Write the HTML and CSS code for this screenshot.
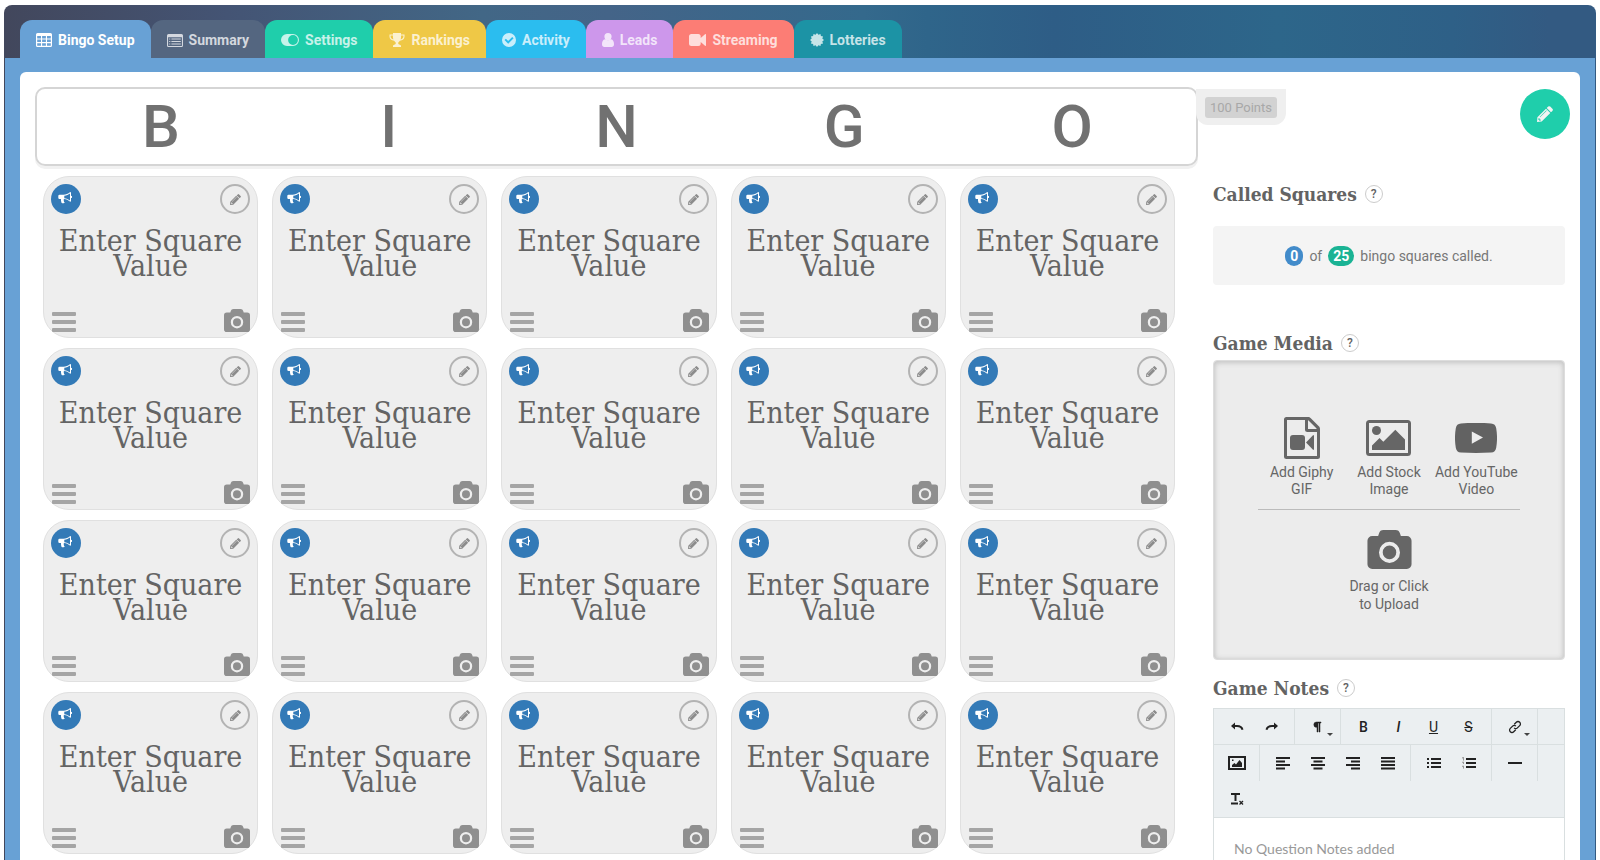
FILE: index.html
```html
<!DOCTYPE html>
<html lang="en">
<head>
    <meta charset="UTF-8">
    <meta name="viewport" content="width=device-width, initial-scale=1.0">
    <title>Bingo Setup</title>
    <link rel="stylesheet" href="styles.css">
</head>
<body>
    <svg class="sprite" aria-hidden="true">
        <symbol id="i-table" viewBox="0 0 16 14"><path fill-rule="evenodd" d="M1.5 0h13A1.5 1.5 0 0 1 16 1.500v11a1.500 1.500 0 0 1-1.500 1.500h-13A1.500 1.500 0 0 1 0 12.500v-11A1.500 1.500 0 0 1 1.500 0zM1.200 3v2.500h3.800V3zM6.100 3v2.500h3.800V3zM11 3v2.500h3.800V3zM1.200 6.600v2.500h3.800V6.600zM6.100 6.600v2.500h3.800V6.600zM11 6.600v2.500h3.800V6.600zM1.200 10.200v2.500h3.800v-2.500zM6.100 10.200v2.500h3.800v-2.500zM11 10.200v2.500h3.800v-2.500z"/></symbol>
        <symbol id="i-list" viewBox="0 0 16 13"><path fill-rule="evenodd" d="M1.500 0h13A1.500 1.500 0 0 1 16 1.500v10a1.500 1.500 0 0 1-1.500 1.500h-13A1.500 1.500 0 0 1 0 11.500v-10A1.500 1.500 0 0 1 1.500 0zM1.100 3.200v8.700h13.800V3.200zM2.200 4.400h1.100v1H2.200zM4.400 4.400h9.400v1H4.400zM2.200 6.900h1.100v1H2.200zM4.400 6.900h9.400v1H4.400zM2.200 9.400h1.100v1H2.200zM4.400 9.400h9.400v1H4.400z"/></symbol>
        <symbol id="i-toggle" viewBox="0 0 18 12"><path fill-rule="evenodd" d="M6 0h6a6 6 0 0 1 0 12H6A6 6 0 0 1 6 0zM12 1.100a4.900 4.900 0 1 0 0 9.800a4.900 4.900 0 1 0 0-9.800z"/></symbol>
        <symbol id="i-trophy" viewBox="0 0 16 14"><path fill-rule="evenodd" d="M4 0h8v1.500h3.500v2.300c0 2-2 3.700-4.600 3.900C10 8.700 9.200 9 9.200 10.200c0 .9.700 1.200 1.600 1.500.7.200 1.200.7 1.200 1.300v1H4v-1c0-.6.500-1.100 1.200-1.300.9-.3 1.600-.6 1.600-1.500C6.800 9 6 8.700 5.100 7.700 2.500 7.500.5 5.800.5 3.800V1.500H4zM1.600 2.600v1.200c0 1 1 2.200 2.700 2.600C4 5.200 3.900 4 3.900 2.600zM14.400 2.600h-2.300c0 1.400-.1 2.600-.4 3.800 1.700-.4 2.700-1.600 2.700-2.600z"/></symbol>
        <symbol id="i-check" viewBox="0 0 14 14"><path fill-rule="evenodd" d="M7 0a7 7 0 1 1 0 14A7 7 0 0 1 7 0zM10.200 3.900L6.200 7.900 3.900 5.700 2.500 7.100l3.700 3.600 5.400-5.400z"/></symbol>
        <symbol id="i-user" viewBox="0 0 12 14"><path d="M6 0a3.600 3.600 0 1 1 0 7.200A3.600 3.600 0 0 1 6 0zM3 6.300c1.800 1.500 4.200 1.500 6 0 2.200.2 3 2.700 3 4.900 0 1.700-1 2.800-2.400 2.800H2.400C1 14 0 12.900 0 11.200c0-2.200.8-4.700 3-4.900z"/></symbol>
        <symbol id="i-video" viewBox="0 0 17 12"><path d="M2.500 0h6.700a2.500 2.500 0 0 1 2.500 2.500v1.600L16 .3c.4-.4 1-.1 1 .4v10.600c0 .5-.6.800-1 .4l-4.300-3.800v1.600A2.500 2.500 0 0 1 9.200 12H2.500A2.500 2.500 0 0 1 0 9.500v-7A2.500 2.500 0 0 1 2.500 0z"/></symbol>
        <symbol id="i-burst" viewBox="0 0 14 14"><path d="M7 0L8.400 1.700 10.500.9 10.900 3.100 13.100 3.500 12.300 5.600 14 7 12.300 8.400 13.100 10.500 10.900 10.900 10.500 13.100 8.400 12.300 7 14 5.600 12.300 3.500 13.100 3.100 10.900.9 10.500 1.700 8.400 0 7 1.700 5.600.9 3.500 3.100 3.100 3.500.9 5.600 1.700z"/></symbol>
        <symbol id="i-pencil" viewBox="0 0 16 16"><path fill-rule="evenodd" d="M11.200.6a1.500 1.500 0 0 1 2 0l2.200 2.200a1.500 1.500 0 0 1 0 2.100L14 6.300 9.700 2zM9 2.700L13.300 7 4.700 15.600 0 16l.4-4.700zM9.300 4.300L2.700 10.900l.4.400 6.600-6.600zM1.500 12.200l-.2 1.300 1.200 1.200 1.300-.2-.1-1.100H2.600v-1.100z"/></symbol>
        <symbol id="i-horn" viewBox="0 0 14 12"><path fill-rule="evenodd" d="M12.200 0c.5 0 .8.300.8.800v3a1.100 1.100 0 0 1 0 2.200v3c0 .5-.3.800-.8.800-1.900-1.600-3.800-2.600-6-2.800-.7.400-.8 1.200-.2 1.700-.4.700.2 1.200.8 1.800-.5 1-2.500 1-3.200.4-.4-1.400-.9-2.500-.5-3.900H1.500A1.200 1.200 0 0 1 .3 5.800V4a1.200 1.200 0 0 1 1.200-1.200h4C7.900 2.800 10.100 1.700 12.200 0zM12 1.400C10.300 2.700 8.600 3.400 6.300 3.700v2.500c2.300.2 4 1 5.700 2.300z"/></symbol>
        <symbol id="i-camera" viewBox="0 0 26 23"><path fill-rule="evenodd" d="M9.500 0h7c1.500 0 2.300.7 2.700 2l.5 1.600h3.500A2.800 2.800 0 0 1 26 6.400v13.800a2.800 2.800 0 0 1-2.800 2.800H2.800A2.800 2.800 0 0 1 0 20.200V6.400a2.800 2.800 0 0 1 2.800-2.800h3.500L6.800 2c.4-1.300 1.200-2 2.700-2zM13 7a6.200 6.200 0 1 0 0 12.400A6.200 6.200 0 1 0 13 7zM13 9.200a4 4 0 1 1 0 8a4 4 0 1 1 0-8z"/></symbol>
        <symbol id="i-bars" viewBox="0 0 24 20"><path d="M1 0h22a1 1 0 0 1 1 1v2a1 1 0 0 1-1 1H1a1 1 0 0 1-1-1V1a1 1 0 0 1 1-1zM1 8h22a1 1 0 0 1 1 1v2a1 1 0 0 1-1 1H1a1 1 0 0 1-1-1V9a1 1 0 0 1 1-1zM1 16h22a1 1 0 0 1 1 1v2a1 1 0 0 1-1 1H1a1 1 0 0 1-1-1v-2a1 1 0 0 1 1-1z"/></symbol>
    </svg>

    <div class="frame">
        <nav class="tabs">
            <a href="#" class="tab tab-setup"><svg width="16" height="14"><use href="#i-table"/></svg>Bingo Setup</a>
            <a href="#" class="tab tab-summary"><svg width="16" height="13"><use href="#i-list"/></svg>Summary</a>
            <a href="#" class="tab tab-settings"><svg width="18" height="12"><use href="#i-toggle"/></svg>Settings</a>
            <a href="#" class="tab tab-rankings"><svg width="16" height="14"><use href="#i-trophy"/></svg>Rankings</a>
            <a href="#" class="tab tab-activity"><svg width="14" height="14"><use href="#i-check"/></svg>Activity</a>
            <a href="#" class="tab tab-leads"><svg width="12" height="14"><use href="#i-user"/></svg>Leads</a>
            <a href="#" class="tab tab-streaming"><svg width="17" height="12"><use href="#i-video"/></svg>Streaming</a>
            <a href="#" class="tab tab-lotteries"><svg width="14" height="14"><use href="#i-burst"/></svg>Lotteries</a>
        </nav>

        <div class="body">
            <div class="panel">
                <main class="board">
                    <div class="letters">
                        <span>B</span><span>I</span><span>N</span><span>G</span><span>O</span>
                        <div class="points"><span>100 Points</span></div>
                    </div>
                    <div class="squares" id="squares"></div>
                </main>

                <aside class="side">
                    <button class="edit" aria-label="Edit game"><svg width="16" height="16"><use href="#i-pencil"/></svg></button>

                    <h2>Called Squares <button class="help">?</button></h2>
                    <p class="called"><b class="pill blue">0</b> of <b class="pill green">25</b> bingo squares called.</p>

                    <h2>Game Media <button class="help">?</button></h2>
                    <div class="media">
                        <div class="media-row">
                            <button class="media-btn">
                                <svg width="36" height="42" viewBox="0 0 36 42" fill="#626262"><path fill-rule="evenodd" d="M2.500 0H24c1.200 0 2 .4 2.800 1.200l8 8c.8.800 1.200 1.600 1.200 2.800v27.500a2.500 2.500 0 0 1-2.500 2.500h-31A2.500 2.500 0 0 1 0 39.500v-37A2.500 2.500 0 0 1 2.500 0zM3 3v36h30V15h-9.500a2.500 2.500 0 0 1-2.500-2.500V3zM24 3.300V12h8.700c-.1-.4-.3-.7-.6-1l-7.100-7.100c-.3-.3-.6-.5-1-.6z"/><rect x="6" y="18" width="15" height="15" rx="3"/><path d="M22 25.500l7-7.300h1v14.600h-1z"/></svg>
                                <span>Add Giphy<br>GIF</span>
                            </button>
                            <button class="media-btn">
                                <svg width="45" height="42" viewBox="0 0 45 42" fill="#626262"><path fill-rule="evenodd" d="M3.500 3h38A3.500 3.500 0 0 1 45 6.500v29a3.500 3.500 0 0 1-3.500 3.500h-38A3.500 3.500 0 0 1 0 35.500v-29A3.500 3.500 0 0 1 3.500 3zM3 6v30h39V6z"/><circle cx="10.500" cy="13.500" r="4.500"/><path d="M6 33v-4.500l7.500-7.500 3.800 3.800 12-12L39 22.500V33z"/></svg>
                                <span>Add Stock<br>Image</span>
                            </button>
                            <button class="media-btn">
                                <svg width="42" height="42" viewBox="0 0 42 42"><path fill="#626262" fill-rule="evenodd" d="M21 6c6.500 0 10.800.2 15 .4 3.200.3 4.600 1.600 5.200 4.900 1.100 6.300 1.100 13 0 19.400-.6 3.300-2 4.600-5.200 4.900-10 .6-20 .6-30 0-3.200-.3-4.600-1.600-5.200-4.900-1.100-6.400-1.100-13.100 0-19.400C1.400 8 2.800 6.700 6 6.400 10.200 6.200 14.500 6 21 6zM16.800 14.500v12.200L28 20.600z"/></svg>
                                <span>Add YouTube<br>Video</span>
                            </button>
                        </div>
                        <button class="media-btn upload">
                            <svg width="45" height="39" fill="#626262"><use href="#i-camera"/></svg>
                            <span>Drag or Click<br>to Upload</span>
                        </button>
                    </div>

                    <h2 class="notes-title"><label for="notes">Game Notes</label> <button class="help">?</button></h2>
                    <div class="editor">
                        <div class="toolbar">
                            <div class="tools">
                                <div class="group">
                                    <button aria-label="Undo"><svg width="14" height="14" viewBox="0 0 14 14"><path d="M2 6h5c3 0 5 1.500 5.500 3.800" class="ln"/><path d="M5 2.500v7L1 6z"/></svg></button>
                                    <button aria-label="Redo"><svg width="14" height="14" viewBox="0 0 14 14"><path d="M12 6H7C4 6 2 7.500 1.500 9.800" class="ln"/><path d="M9 2.500v7L13 6z"/></svg></button>
                                </div>
                                <div class="group">
                                    <button class="drop" aria-label="Paragraph format"><svg width="14" height="14" viewBox="0 0 14 14"><path d="M5.500 2H10v1H9v9H8V3H7v9H6V7.300H5.500A2.600 2.600 0 0 1 5.500 2z" stroke="#222" stroke-width=".5"/></svg></button>
                                </div>
                                <div class="group">
                                    <button aria-label="Bold"><b>B</b></button>
                                    <button aria-label="Italic"><i>I</i></button>
                                    <button aria-label="Underline"><u>U</u></button>
                                    <button aria-label="Strikethrough"><s>S</s></button>
                                </div>
                                <div class="group">
                                    <button class="drop" aria-label="Insert link"><svg width="14" height="14" viewBox="0 0 14 14"><path class="thin" d="M6.300 4.200l2-2a2.300 2.300 0 0 1 3.400 3.400L9.400 7.900a2.300 2.300 0 0 1-3.300 0M7.700 9.800l-2 2a2.300 2.300 0 0 1-3.400-3.400l2.300-2.300a2.300 2.300 0 0 1 3.300 0"/></svg></button>
                                </div>
                            </div>
                            <div class="tools">
                                <div class="group">
                                    <button aria-label="Insert image"><svg width="18" height="14" viewBox="0 0 18 14"><path fill-rule="evenodd" d="M0 0h18v14H0zM2 2v10h14V2z"/><path d="M4 11V9l2.500-2 1.500 1.500L11.500 4 14 7v4zM4 3.500h1.500V5H4z"/></svg></button>
                                </div>
                                <div class="group">
                                    <button aria-label="Align left"><svg width="14" height="14" viewBox="0 0 14 14"><path class="ln" d="M0 2h14M0 5.500h9M0 9h14M0 12.500h9"/></svg></button>
                                    <button aria-label="Align center"><svg width="14" height="14" viewBox="0 0 14 14"><path class="ln" d="M0 2h14M2.500 5.500h9M0 9h14M2.500 12.500h9"/></svg></button>
                                    <button aria-label="Align right"><svg width="14" height="14" viewBox="0 0 14 14"><path class="ln" d="M0 2h14M5 5.500h9M0 9h14M5 12.500h9"/></svg></button>
                                    <button aria-label="Justify"><svg width="14" height="14" viewBox="0 0 14 14"><path class="ln" d="M0 2h14M0 5.500h14M0 9h14M0 12.500h14"/></svg></button>
                                </div>
                                <div class="group">
                                    <button aria-label="Bulleted list"><svg width="14" height="14" viewBox="0 0 14 14"><path class="ln" d="M0 3h2M0 7h2M0 11h2M4 3h10M4 7h10M4 11h10"/></svg></button>
                                    <button aria-label="Numbered list"><svg width="14" height="14" viewBox="0 0 14 14"><path class="ln" d="M4 3h10M4 7h10M4 11h10"/><path stroke="#999" d="M.5 1.500h1v3M.5 6h1v2M.5 10h1v2.500"/></svg></button>
                                </div>
                                <div class="group">
                                    <button aria-label="Horizontal line"><svg width="14" height="14" viewBox="0 0 14 14"><path class="ln" d="M0 7h14"/></svg></button>
                                </div>
                            </div>
                            <div class="tools">
                                <button aria-label="Clear formatting"><svg width="14" height="14" viewBox="0 0 14 14"><path class="ln" d="M1 2h9M5.500 2v7M1 11.500h7"/><path class="thin" d="M9.500 9l3.500 3.500M13 9l-3.500 3.500"/></svg></button>
                            </div>
                        </div>
                        <textarea id="notes" placeholder="No Question Notes added"></textarea>
                    </div>
                </aside>
            </div>
        </div>
    </div>

    <script>
        const squares = document.getElementById('squares');
        for (let i = 0; i < 20; i++) {
            const square = document.createElement('div');
            square.className = 'square';
            square.innerHTML = `
                <div class="square-row">
                    <button class="round call" aria-label="Call square"><svg width="14" height="12"><use href="#i-horn"/></svg></button>
                    <button class="round change" aria-label="Edit square"><svg width="11" height="11"><use href="#i-pencil"/></svg></button>
                </div>
                <div class="square-value">Enter Square Value</div>
                <div class="square-row bottom">
                    <button class="plain drag" aria-label="Move square"><svg width="24" height="20"><use href="#i-bars"/></svg></button>
                    <button class="plain photo" aria-label="Add picture"><svg width="26" height="23"><use href="#i-camera"/></svg></button>
                </div>
            `;
            squares.appendChild(square);
        }
    </script>
</body>
</html>
```
FILE: styles.css
```css
* {
    box-sizing: border-box;
}
body {
    margin: 0;
    padding: 5px 4px 0;
    height: 100vh;
    overflow: hidden;
    font-family: Roboto, "Liberation Sans", sans-serif;
    color: #666;
    background: #fff;
}
button {
    padding: 0;
    border: none;
    background: none;
    font-family: inherit;
    color: inherit;
    cursor: pointer;
}
svg {
    fill: currentColor;
    display: block;
}
.sprite {
    position: absolute;
    width: 0;
    height: 0;
}
.frame {
    display: flex;
    flex-direction: column;
    min-height: 100%;
    padding: 0 1px;
    border-radius: 8px 8px 0 0;
    overflow: hidden;
    background: linear-gradient(90deg, #42475c 0, #445474 14%, #426786 30%, #446488 38%, #34698c 54%, #2f658a 58%, #2e5d86 66%, #2d668a 80%, #2e6087 91%, #335a82 97%);
}

/* tabs */
.tabs {
    display: flex;
    padding: 15px 15px 0;
    height: 53px;
}
.tab {
    display: flex;
    align-items: center;
    gap: 6px;
    height: 38px;
    padding: 2px 16px 0;
    border-radius: 12px 12px 0 0;
    font-size: 14px;
    font-weight: bold;
    color: rgba(255, 255, 255, 0.75);
    text-decoration: none;
}
.tab-setup { background: #68a1d5; color: #fff; }
.tab-summary { background: #546680; }
.tab-settings { background: #1fceab; }
.tab-rankings { background: #efc846; }
.tab-activity { background: #2bbdef; }
.tab-leads { background: #cd97eb; }
.tab-streaming { background: #fc7d75; }
.tab-lotteries { background: #1c93a5; }

.body {
    display: flex;
    flex: 1;
    padding: 14px 15px 0;
    background: #68a1d5;
}
.panel {
    display: flex;
    flex: 1;
    gap: 15px;
    padding: 15px 15px 0;
    border-radius: 6px 6px 0 0;
    background: #fff;
}

/* board */
.board {
    flex: 1;
}
.letters {
    position: relative;
    display: grid;
    grid-template-columns: repeat(5, 1fr);
    padding: 0 10px;
    border: 2px solid #d5d5d5;
    border-radius: 10px;
    box-shadow: 0 3px 0 #f1f1f1;
    font-size: 60px;
    font-weight: 500;
    line-height: 75px;
    text-align: center;
    color: #717171;
}
.points {
    position: absolute;
    left: 100%;
    top: 0;
    padding: 8px 9px 7px;
    border-radius: 0 0 12px 12px;
    background: #efefef;
    font-size: 13px;
    font-weight: 400;
    line-height: 21px;
    white-space: nowrap;
}
.points span {
    display: block;
    padding: 0 5px;
    border-radius: 3px;
    background: #d2d2d2;
    color: #a8a8a8;
}
.squares {
    display: grid;
    grid-template-columns: repeat(5, 1fr);
    gap: 10px 14px;
    padding: 10px 23px 0 8px;
}
.square {
    display: flex;
    flex-direction: column;
    height: 162px;
    padding: 7px 7px 5px;
    border: 1px solid #e0e0e0;
    border-radius: 26px;
    background: #eee;
}
.square-row {
    display: flex;
    justify-content: space-between;
}
.square-row.bottom {
    align-items: flex-end;
    margin-top: auto;
    padding-left: 1px;
}
.round {
    display: flex;
    align-items: center;
    justify-content: center;
    width: 30px;
    height: 30px;
    border-radius: 50%;
}
.call {
    padding: 0 2px 3px 0;
    background: #337ab7;
    color: #fff;
}
.change {
    border: 2px solid #b3b3b3;
    color: #8c8c8c;
}
.square-value {
    padding-top: 14px;
    font-family: "Roboto Slab", "DejaVu Serif Condensed", "DejaVu Serif", serif;
    font-size: 30px;
    line-height: 25px;
    text-align: center;
    color: #646464;
}
.drag { color: #a5a5a5; }
.photo { color: #8f8f8f; }

/* side column */
.side {
    position: relative;
    display: flex;
    flex-direction: column;
    width: 352px;
    padding-top: 93px;
}
.edit {
    position: absolute;
    top: 2px;
    right: -5px;
    display: flex;
    align-items: center;
    justify-content: center;
    width: 50px;
    height: 50px;
    border-radius: 50%;
    background: #1fceab;
    color: #f3f3f3;
}
h2 {
    display: flex;
    align-items: center;
    gap: 8px;
    margin: 0;
    font-family: "Roboto Slab", "DejaVu Serif Condensed", "DejaVu Serif", serif;
    font-size: 19px;
    font-weight: bold;
    line-height: 28px;
    color: #636363;
}
.help {
    width: 18px;
    height: 18px;
    border: 1px solid #ccc;
    border-radius: 50%;
    font-family: Roboto, sans-serif;
    font-size: 12px;
    font-weight: 500;
    line-height: 16px;
}
.called {
    display: flex;
    align-items: center;
    justify-content: center;
    gap: 6px;
    height: 59px;
    margin: 18px 0 44px;
    border-radius: 4px;
    background: #f4f4f4;
    font-size: 14px;
    color: #777;
}
.pill {
    padding: 0 5px;
    border-radius: 10px;
    line-height: 20px;
    color: #fff;
}
.blue { background: #428bca; }
.green { background: #1ab394; }
.media {
    height: 300px;
    margin-top: 3px;
    padding: 56px 44px 0;
    border: 1px solid #ddd;
    border-radius: 4px;
    background: #ececec;
    box-shadow: inset 0 1px 5px 1px #c4c4c4;
}
.media-row {
    display: grid;
    grid-template-columns: repeat(3, 1fr);
    padding-bottom: 11px;
    border-bottom: 1px solid #bbb;
}
.media-btn {
    display: flex;
    flex-direction: column;
    align-items: center;
    gap: 5px;
    font-size: 14px;
    line-height: 17px;
    color: #666;
}
.upload {
    gap: 8px;
    margin: 20px auto 0;
    line-height: 18px;
}
.notes-title {
    margin-top: 14px;
}

/* notes editor */
.editor {
    display: flex;
    flex: 1;
    flex-direction: column;
    margin-top: 6px;
    border: 1px solid #d9dfe0;
    border-bottom: none;
}
.toolbar {
    border-bottom: 1px solid #d9dfe0;
    background: #ebeff1;
    color: #222;
}
.tools {
    display: flex;
    height: 36px;
    padding-left: 5px;
}
.tools:first-child {
    border-bottom: 1px solid #d9dfe0;
}
.group {
    display: flex;
    padding: 0 5px;
    border-right: 1px solid #d9dfe0;
}
.group:first-child {
    padding-left: 0;
}
.tools button {
    position: relative;
    display: flex;
    align-items: center;
    justify-content: center;
    width: 35px;
    font-size: 14px;
}
.tools b {
    font-weight: 500;
}
.tools i {
    font-weight: 500;
}
.drop::after {
    content: "";
    position: absolute;
    right: 2px;
    bottom: 8px;
    border: 3px solid transparent;
    border-top-color: #444;
    border-bottom: none;
}
.ln {
    fill: none;
    stroke: #222;
    stroke-width: 2;
}
.thin {
    fill: none;
    stroke: #222;
    stroke-width: 1.3;
}
textarea {
    flex: 1;
    width: 100%;
    padding: 20px;
    border: none;
    resize: none;
    font-family: Lato, sans-serif;
    font-size: 14px;
    line-height: 22px;
    outline: none;
}
textarea::placeholder {
    color: #999;
}
```
